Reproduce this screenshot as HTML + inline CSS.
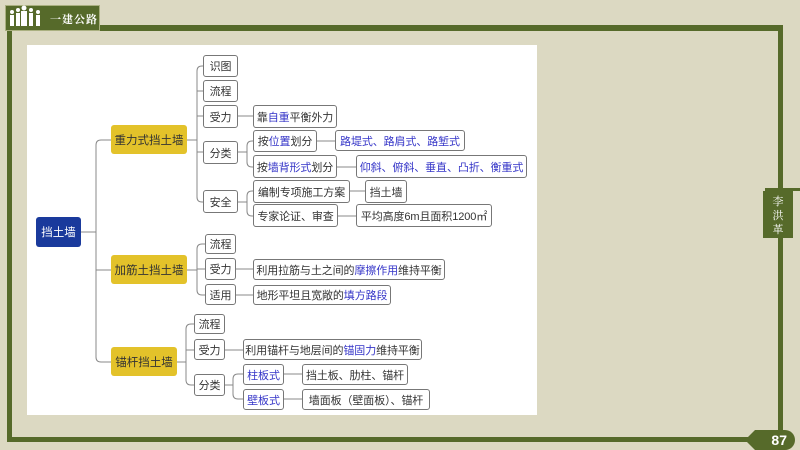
<!DOCTYPE html>
<html><head><meta charset="utf-8"><style>
*{margin:0;padding:0;box-sizing:border-box}
body{width:800px;height:450px;background:#dcd9c2;position:relative;overflow:hidden;font-family:"Liberation Sans","Noto Sans CJK SC",sans-serif}
.g{position:absolute;background:#566a2a}
.w{position:absolute;left:27px;top:45px;width:510px;height:370px;background:#fff}
.b{position:absolute;border:1px solid #777;border-radius:3px;background:#fff;font-size:11px;color:#333;display:flex;align-items:center;justify-content:center;white-space:nowrap;letter-spacing:-0.1px}
.y{position:absolute;background:#e3c22a;border-radius:3px;font-size:11.5px;color:#333;display:flex;align-items:center;justify-content:center}
.h{color:#3535c8}
svg{position:absolute;left:0;top:0}
</style></head><body>
<div class="g" style="left:100px;top:25px;width:683px;height:6px"></div>
<div class="g" style="left:7px;top:30px;width:5px;height:412px"></div>
<div class="g" style="left:7px;top:437px;width:745px;height:5px"></div>
<div class="g" style="left:778px;top:25px;width:5px;height:405px"></div>
<div class="g" style="left:5px;top:5px;width:95px;height:26px;border:1px solid #aab080"></div>
<div style="position:absolute;left:50px;top:11px;color:#fff;font-size:11px;font-weight:bold;font-family:'Noto Serif CJK SC',serif;letter-spacing:1px">一建公路</div>
<svg width="800" height="450">
<g fill="#fff"><circle cx="12" cy="12" r="2"/><rect x="10" y="15" width="4" height="11"/><circle cx="18" cy="10" r="2"/><rect x="16" y="13" width="4" height="13"/><circle cx="24" cy="8" r="2.5"/><rect x="21" y="11" width="6" height="15"/><circle cx="31" cy="10" r="2"/><rect x="29" y="13" width="4" height="13"/><circle cx="38" cy="12" r="2"/><rect x="36" y="15" width="4" height="11"/></g>
<g fill="none" stroke="#888" stroke-width="1">
<path d="M81 232H96M96 232V145Q96 140 101 140H111M96 232V357Q96 362 101 362H111M96 232V270H111"/>
<path d="M187 140H197M197 140V71Q197 66 202 66H203M197 91H203M197 116H203M197 140V197Q197 202 202 202H203M197 152H203"/>
<path d="M238 116H253M238 152H247M247 152V146Q247 141 252 141H253M247 152V162Q247 167 252 167H253M317 141H335M337 167H356"/>
<path d="M238 202H247M247 202V196Q247 191 252 191H253M247 202V211Q247 216 252 216H253M350 191H365M338 216H356"/>
<path d="M187 270H197M197 270V249Q197 244 202 244H205M197 269H205M197 270V290Q197 295 202 295H205M236 269H253M236 295H253"/>
<path d="M177 362H186M186 362V329Q186 324 191 324H194M186 350H194M186 362V380Q186 385 191 385H194M225 350H243M225 385H233M233 385V379Q233 374 238 374H243M233 385V394Q233 399 238 399H243M284 374H302M284 399H302"/>
</g></svg>
<div class="w" style="z-index:-1"></div>
<div class="y" style="left:36px;top:217px;width:45px;height:30px;background:#1a3a9c;color:#fff">挡土墙</div>
<div class="y" style="left:111px;top:125px;width:76px;height:29px">重力式挡土墙</div>
<div class="y" style="left:111px;top:255px;width:76px;height:29px">加筋土挡土墙</div>
<div class="y" style="left:111px;top:347px;width:66px;height:29px">锚杆挡土墙</div>
<div class="b" style="left:203px;top:55px;width:35px;height:22px">识图</div>
<div class="b" style="left:203px;top:80px;width:35px;height:22px">流程</div>
<div class="b" style="left:203px;top:105px;width:35px;height:23px">受力</div>
<div class="b" style="left:203px;top:141px;width:35px;height:23px">分类</div>
<div class="b" style="left:203px;top:190px;width:35px;height:23px">安全</div>
<div class="b" style="left:253px;top:105px;width:84px;height:23px">靠<span class="h">自重</span>平衡外力</div>
<div class="b" style="left:253px;top:130px;width:64px;height:22px">按<span class="h">位置</span>划分</div>
<div class="b" style="left:253px;top:155px;width:84px;height:23px">按<span class="h">墙背形式</span>划分</div>
<div class="b" style="left:335px;top:130px;width:130px;height:21px"><span class="h">路堤式、路肩式、路堑式</span></div>
<div class="b" style="left:356px;top:155px;width:171px;height:23px"><span class="h">仰斜、俯斜、垂直、凸折、衡重式</span></div>
<div class="b" style="left:253px;top:180px;width:97px;height:23px">编制专项施工方案</div>
<div class="b" style="left:253px;top:204px;width:85px;height:23px">专家论证、审查</div>
<div class="b" style="left:365px;top:180px;width:42px;height:23px">挡土墙</div>
<div class="b" style="left:356px;top:204px;width:136px;height:23px">平均高度6m且面积1200㎡</div>
<div class="b" style="left:205px;top:234px;width:31px;height:20px">流程</div>
<div class="b" style="left:205px;top:258px;width:31px;height:22px">受力</div>
<div class="b" style="left:205px;top:284px;width:31px;height:21px">适用</div>
<div class="b" style="left:253px;top:259px;width:192px;height:21px">利用拉筋与土之间的<span class="h">摩擦作用</span>维持平衡</div>
<div class="b" style="left:253px;top:285px;width:138px;height:20px">地形平坦且宽敞的<span class="h">填方路段</span></div>
<div class="b" style="left:194px;top:314px;width:31px;height:20px">流程</div>
<div class="b" style="left:194px;top:339px;width:31px;height:21px">受力</div>
<div class="b" style="left:194px;top:374px;width:31px;height:22px">分类</div>
<div class="b" style="left:243px;top:339px;width:179px;height:21px">利用锚杆与地层间的<span class="h">锚固力</span>维持平衡</div>
<div class="b" style="left:243px;top:364px;width:41px;height:21px"><span class="h">柱板式</span></div>
<div class="b" style="left:243px;top:389px;width:41px;height:21px"><span class="h">壁板式</span></div>
<div class="b" style="left:302px;top:364px;width:106px;height:21px">挡土板、肋柱、锚杆</div>
<div class="b" style="left:302px;top:389px;width:128px;height:21px">墙面板（壁面板）、锚杆</div>
<div class="g" style="left:765px;top:188px;width:35px;height:3px"></div>
<div class="g" style="left:763px;top:191px;width:30px;height:47px;color:#fff;font-size:11px;font-family:'Noto Serif CJK SC',serif;display:flex;flex-direction:column;align-items:center;justify-content:center;line-height:14px">李<br>洪<br>革</div>
<div class="g" style="left:745px;top:430px;width:50px;height:20px;border-radius:10px;clip-path:polygon(10px 0,100% 0,100% 100%,10px 100%,0 50%);color:#fff;font-weight:bold;font-size:14px;display:flex;align-items:center;justify-content:flex-end;padding-right:8px">87</div>
</body></html>
